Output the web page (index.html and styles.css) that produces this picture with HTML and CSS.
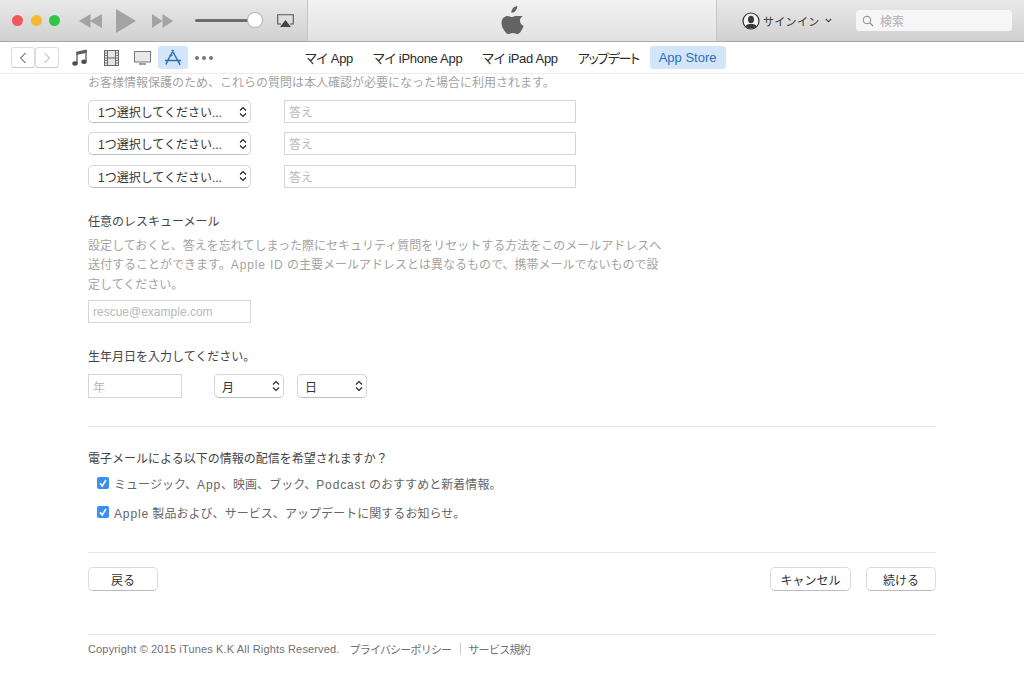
FILE: index.html
```html
<!DOCTYPE html>
<html lang="ja">
<head>
<meta charset="utf-8">
<title>iTunes</title>
<link rel="stylesheet" href="styles.css">
</head>
<body>
<header class="titlebar">
  <div class="tb-left">
    <div class="lights"><span class="light red"></span><span class="light yellow"></span><span class="light green"></span></div>
    <div class="transport">
      <svg class="ic-rew" width="23" height="14" viewBox="0 0 23 14"><path d="M0 7 11.500 0v14zM11 7 23 0v14z" fill="#a3a3a3"/></svg>
      <svg class="ic-play" width="20" height="24" viewBox="0 0 20 24"><path d="M0 0 20 12 0 24z" fill="#a3a3a3"/></svg>
      <svg class="ic-ff" width="21" height="14" viewBox="0 0 21 14"><path d="M0 0 10.500 7 0 14zM10.500 0 21 7 10.500 14z" fill="#a3a3a3"/></svg>
    </div>
    <div class="volume"><span class="knob"></span></div>
    <svg class="ic-air" width="17" height="14" viewBox="0 0 17 14"><path d="M4 10H.7V.7h15.600V10H13" fill="none" stroke="#555" stroke-width="1.100"/><path d="M8.500 6 14 13H3z" fill="#444"/></svg>
  </div>
  <div class="tb-center">
    <svg width="24" height="29" viewBox="0 0 24 29"><path d="M17.200 0c.2 2-.6 3.600-1.600 4.800-1 1.200-2.600 2.100-4.200 2-.2-1.800.7-3.600 1.600-4.600C14 1 15.800.1 17.200 0zM22.800 10c-1.700 1-2.800 2.700-2.800 4.800 0 2.500 1.500 4.300 3.600 5.100-.6 1.800-1.400 3.500-2.500 5-1.100 1.600-2.300 3.100-4 3.100-1.700 0-2.300-1-4.300-1s-2.700 1-4.300 1c-1.700.1-3-1.600-4.100-3.200C2 21.700.4 16.600 2.500 13c1.100-1.900 3-3 5-3.100 1.700 0 3.200 1.100 4.300 1.100 1.100 0 2.700-1.300 4.700-1.100 1.300 0 3.900.5 6.300 0z" fill="#636363"/></svg>
  </div>
  <div class="tb-right">
    <div class="signin">
      <svg width="18" height="18" viewBox="0 0 18 18"><defs><clipPath id="cp"><circle cx="9" cy="9" r="7.600"/></clipPath></defs><circle cx="9" cy="9" r="8" fill="#f4f4f4" stroke="#333" stroke-width="1.200"/><g clip-path="url(#cp)" fill="#3a3a3a"><ellipse cx="9" cy="7.500" rx="3" ry="3.800"/><path d="M2 18c0-4 3-5.500 5-6h4c2 .5 5 2 5 6z"/></g></svg>
      <span class="signin-text">サインイン</span>
      <svg width="7" height="5" viewBox="0 0 7 5"><path d="M.8 1 3.500 3.700 6.200 1" fill="none" stroke="#444" stroke-width="1.100"/></svg>
    </div>
    <div class="search">
      <svg width="12" height="12" viewBox="0 0 12 12"><circle cx="5" cy="5" r="3.800" fill="none" stroke="#8a8a8a" stroke-width="1"/><path d="M7.800 7.800 11 11" stroke="#8a8a8a" stroke-width="1.200"/></svg>
      <span class="search-text">検索</span>
    </div>
  </div>
</header>

<nav class="toolbar">
  <div class="pager">
    <span class="page-btn"><svg width="8" height="12" viewBox="0 0 8 12"><path d="M6.500 1 1.500 6l5 5" fill="none" stroke="#333" stroke-width="1"/></svg></span>
    <span class="page-btn"><svg width="8" height="12" viewBox="0 0 8 12"><path d="M1.500 1l5 5-5 5" fill="none" stroke="#a8a8a8" stroke-width="1"/></svg></span>
  </div>
  <div class="media">
    <svg class="m-music" width="15" height="17" viewBox="0 0 15 17"><path d="M5 3v11M14 1v11.500" fill="none" stroke="#5c5c5c" stroke-width="1.300"/><path d="M4.400 2.800 14.600.5v3.200L4.400 6z" fill="#5c5c5c"/><ellipse cx="3" cy="14.500" rx="2.700" ry="2.200" fill="#4c4c4c"/><ellipse cx="12" cy="12.800" rx="2.700" ry="2.200" fill="#4c4c4c"/></svg>
    <svg class="m-film" width="15" height="16" viewBox="0 0 15 16"><rect x=".5" y=".5" width="14" height="15" fill="#e4e4e4" stroke="#6a6a6a"/><path d="M3.500 0v16M11.500 0v16M3.500 8h8" stroke="#6a6a6a"/><path d="M.5 3h3M.5 5.500h3M.5 8h3M.5 10.500h3M.5 13h3M11.500 3h3M11.500 5.500h3M11.500 8h3M11.500 10.500h3M11.500 13h3" stroke="#6a6a6a" stroke-width=".8"/></svg>
    <svg class="m-tv" width="17" height="14" viewBox="0 0 17 14"><rect x=".5" y=".5" width="16" height="10.500" fill="#e8e8e8" stroke="#777"/><path d="M5 13h7" stroke="#777" stroke-width="1.400"/></svg>
    <span class="m-app"><svg width="18" height="17" viewBox="0 0 18 17"><path d="M9.500 1 3.500 12M8 1l7 13M5.500 6.500l3 .1M1 11.500h11M12 11.500h5M3.500 12 2 15.500M14 11 16 16" fill="none" stroke="#2f6fb8" stroke-width="1.500"/></svg></span>
    <span class="m-dots"><i></i><i></i><i></i></span>
  </div>
  <div class="tabs">
    <span class="tab">マイ App</span>
    <span class="tab">マイ iPhone App</span>
    <span class="tab">マイ iPad App</span>
    <span class="tab tab-kana">アップデート</span>
    <span class="tab tab-active">App Store</span>
  </div>
</nav>

<main class="content">
  <p class="note intro">お客様情報保護のため、これらの質問は本人確認が必要になった場合に利用されます。</p>
  <div class="qa">
    <div class="qa-row"><div class="select sel-q"><span>1つ選択してください...</span><svg class="updown" width="8" height="12" viewBox="0 0 8 12"><path d="M1 4.500 4 1.500l3 3M1 7.500l3 3 3-3" fill="none" stroke="#222" stroke-width="1.100"/></svg></div><div class="input in-a">答え</div></div>
    <div class="qa-row"><div class="select sel-q"><span>1つ選択してください...</span><svg class="updown" width="8" height="12" viewBox="0 0 8 12"><path d="M1 4.500 4 1.500l3 3M1 7.500l3 3 3-3" fill="none" stroke="#222" stroke-width="1.100"/></svg></div><div class="input in-a">答え</div></div>
    <div class="qa-row"><div class="select sel-q"><span>1つ選択してください...</span><svg class="updown" width="8" height="12" viewBox="0 0 8 12"><path d="M1 4.500 4 1.500l3 3M1 7.500l3 3 3-3" fill="none" stroke="#222" stroke-width="1.100"/></svg></div><div class="input in-a">答え</div></div>
  </div>

  <h2 class="heading h-rescue">任意のレスキューメール</h2>
  <p class="note para">
    <span class="line">設定しておくと、答えを忘れてしまった際にセキュリティ質問をリセットする方法をこのメールアドレスへ</span>
    <span class="line">送付することができます。<span class="lat">Apple ID</span> の主要メールアドレスとは異なるもので、携帯メールでないもので設</span>
    <span class="line">定してください。</span>
  </p>
  <div class="input in-mail">rescue@example.com</div>

  <h2 class="heading h-birth">生年月日を入力してください。</h2>
  <div class="birth">
    <div class="input in-year">年</div>
    <div class="select sel-month"><span>月</span><svg class="updown" width="8" height="12" viewBox="0 0 8 12"><path d="M1 4.500 4 1.500l3 3M1 7.500l3 3 3-3" fill="none" stroke="#222" stroke-width="1.100"/></svg></div>
    <div class="select sel-day"><span>日</span><svg class="updown" width="8" height="12" viewBox="0 0 8 12"><path d="M1 4.500 4 1.500l3 3M1 7.500l3 3 3-3" fill="none" stroke="#222" stroke-width="1.100"/></svg></div>
  </div>

  <hr class="rule rule-mail">
  <h2 class="heading h-mail">電子メールによる以下の情報の配信を希望されますか？</h2>
  <label class="check c1"><span class="box"><svg width="12" height="12" viewBox="0 0 12 12"><path d="M3 6.300 5.200 9 9 2.800" fill="none" stroke="#fff" stroke-width="1.600"/></svg></span><span>ミュージック、<span class="lat">App</span>、映画、ブック、<span class="lat">Podcast</span> のおすすめと新着情報。</span></label>
  <label class="check c2"><span class="box"><svg width="12" height="12" viewBox="0 0 12 12"><path d="M3 6.300 5.200 9 9 2.800" fill="none" stroke="#fff" stroke-width="1.600"/></svg></span><span><span class="lat">Apple</span> 製品および、サービス、アップデートに関するお知らせ。</span></label>

  <hr class="rule rule-btn">
  <div class="actions">
    <span class="btn btn-back">戻る</span>
    <span class="actions-right"><span class="btn btn-cancel">キャンセル</span><span class="btn btn-next">続ける</span></span>
  </div>

  <hr class="rule rule-foot">
  <footer class="foot">
    <span class="foot-copy">Copyright © 2015 iTunes K.K All Rights Reserved.</span>
    <span class="foot-link">プライバシーポリシー</span>
    <span class="foot-sep"></span>
    <span class="foot-terms">サービス規約</span>
  </footer>
</main>
</body>
</html>
```
FILE: styles.css
```css
* { box-sizing: border-box; }
html, body { margin: 0; height: 100%; overflow: hidden; }
body {
  background: #fff;
  color: #333;
  font-family: "Liberation Sans", "Noto Sans CJK JP", sans-serif;
  font-size: 12px;
}

/* title bar */
.titlebar {
  display: flex;
  height: 42px;
  border-bottom: 1px solid #a9a9a9;
  background: linear-gradient(#e9e9e9, #d0d0d0);
}
.tb-left { width: 308px; display: flex; align-items: center; border-right: 1px solid #c6c6c6; padding-left: 12px; }
.lights { display: flex; gap: 7.500px; }
.light { width: 11px; height: 11px; border-radius: 50%; }
.red { background: #f0575a; }
.yellow { background: #f6b831; }
.green { background: #2fc645; }
.transport { display: flex; align-items: center; margin-left: 19px; }
.ic-play { margin-left: 14px; }
.ic-ff { margin-left: 16px; }
.volume { position: relative; width: 60px; height: 3px; margin-left: 22px; background: #6d6d6d; border-radius: 2px; }
.knob { position: absolute; right: -7px; top: -6px; width: 14px; height: 14px; border-radius: 50%; background: #fff; box-shadow: 0 0 1px 1px #b5b5b5; }
.ic-air { margin-left: 22px; }
.tb-center { flex: 1; display: flex; align-items: center; justify-content: center; padding-bottom: 1px; background: linear-gradient(#f2f2f2, #e2e2e2); }
.tb-right { width: 308px; display: flex; align-items: center; border-left: 1px solid #c6c6c6; padding-left: 25px; }
.signin { display: flex; align-items: center; gap: 3px; width: 114px; font-size: 11px; color: #333; }
.signin-text { margin-right: 2px; letter-spacing: .3px; }
.search { display: flex; align-items: center; width: 156px; height: 21px; background: #f6f6f6; border-radius: 3px; padding-left: 6px; gap: 6px; color: #b0b0b0; }

/* toolbar */
.toolbar {
  position: relative;
  display: flex;
  align-items: center;
  height: 32px;
  border-bottom: 1px solid #ececec;
  padding-left: 11px;
}
.pager { display: flex; }
.page-btn { display: flex; align-items: center; justify-content: center; width: 24px; height: 21px; border: 1px solid #dcdcdc; border-bottom-color: #c8c8c8; border-radius: 3px; background: #fff; }
.media { display: flex; align-items: center; margin-left: 13px; }
.m-film { margin-left: 17px; }
.m-tv { margin-left: 15px; }
.m-app { display: flex; align-items: center; justify-content: center; width: 30px; height: 23px; margin-left: 7px; background: #d3e5f8; border-radius: 3px; }
.m-dots { display: flex; gap: 3px; margin-left: 7px; }
.m-dots i { width: 4px; height: 4px; border-radius: 50%; background: #777; }
.tabs { position: absolute; left: 296px; top: 4px; display: flex; align-items: center; }
.tab { display: flex; align-items: center; height: 23px; padding: 0 9px; font-size: 13px; font-feature-settings: "palt"; letter-spacing: -.3px; color: #2b2b2b; margin-right: 2px; }
.tab-kana { letter-spacing: -1.400px; }
.tab-active { background: #d3e5f8; color: #2f6fb8; border-radius: 3px; letter-spacing: 0; }

/* page */
.content { padding-left: 88px; width: 936px; }
.note { margin: 0; color: #a3a3a3; }
.lat { letter-spacing: .85px; }
.intro { line-height: 18px; }
.qa { margin-top: 8px; }
.qa-row { display: flex; gap: 33px; height: 23px; margin-bottom: 9.250px; }
.select {
  display: flex; align-items: center; justify-content: space-between;
  height: 23px; padding: 0 3px 0 9px;
  border: 1px solid #d6d6d6; border-bottom-color: #bdbdbd; border-radius: 5px;
  background: #fff; color: #333;
}
.sel-q { width: 163px; }
.input { display: flex; align-items: center; height: 23px; padding: 0 4px; border: 1px solid #d5d5d5; color: #b9b9b9; background: #fff; }
.in-a { width: 292px; }
.heading { margin: 0; font-size: 12px; font-weight: 400; color: #444; line-height: 18px; }
.h-rescue { margin-top: 25.250px; }
.para { margin-top: 6px; line-height: 19.500px; }
.line { display: block; white-space: nowrap; }
.in-mail { width: 163px; margin-top: 5px; }
.h-birth { margin-top: 25px; }
.birth { display: flex; margin-top: 8px; }
.in-year { width: 94px; height: 24px; }
.sel-month { width: 70px; height: 24px; margin-left: 32px; padding-left: 7px; }
.sel-day { width: 70px; height: 24px; margin-left: 13px; padding-left: 7px; }
.rule { margin: 0; border: 0; height: 1px; background: #e6e6e6; }
.rule-mail { margin-top: 28px; }
.h-mail { margin-top: 23px; }
.check { display: flex; align-items: center; height: 18px; padding-left: 9px; color: #666; gap: 5px; letter-spacing: .05px; }
.c1 { margin-top: 6px; }
.c2 { margin-top: 11px; }
.box { display: flex; align-items: center; justify-content: center; width: 12px; height: 12px; background: #3a8ff0; border-radius: 2px; }
.rule-btn { margin-top: 31px; }
.actions { display: flex; justify-content: space-between; margin-top: 14px; }
.actions-right { display: flex; gap: 15px; }
.btn { display: flex; align-items: center; justify-content: center; height: 24px; border: 1px solid #dcdcdc; border-bottom-color: #bcbcbc; border-radius: 5px; background: #fff; color: #333; }
.btn-back { width: 70px; }
.btn-cancel { width: 81px; }
.btn-next { width: 70px; }
.rule-foot { margin-top: 43px; }
.foot { display: flex; align-items: center; margin-top: 5px; height: 18px; font-size: 11px; color: #707070; }
.foot-copy { letter-spacing: .15px; }
.foot-link { margin-left: 10px; letter-spacing: -.8px; }
.foot-sep { width: 1px; height: 12px; margin: 0 7px 0 9px; background: #c9c9c9; }
.foot-terms { letter-spacing: -.7px; }
```
